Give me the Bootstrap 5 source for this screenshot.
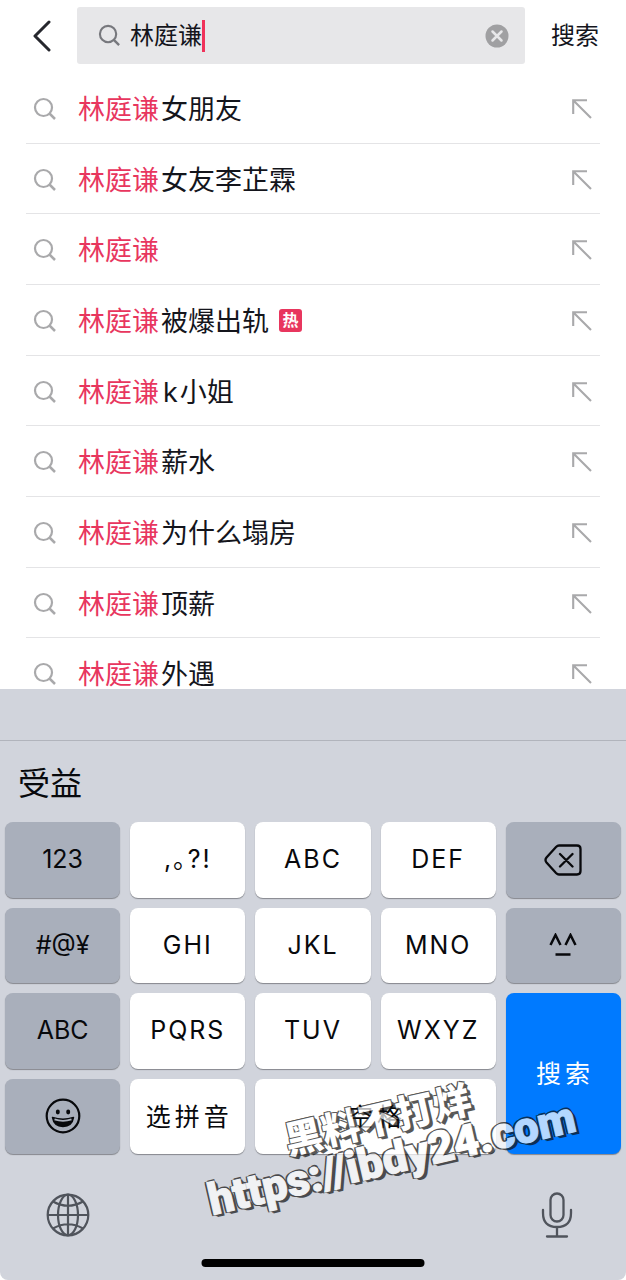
<!DOCTYPE html>
<html lang="zh-CN">
<head>
<meta charset="utf-8">
<meta name="viewport" content="width=device-width, initial-scale=1">
<title>搜索</title>
<link href="https://cdn.jsdelivr.net/npm/bootstrap@5.3.0/dist/css/bootstrap.min.css" rel="stylesheet">
<style>
  body { font-family: Inter, "Noto Sans CJK SC", sans-serif; color: #14151c; background: #fff; }
  svg { display: block; fill: none; stroke: currentColor; }
  .plain-btn { border: 0; background: none; padding: 0; color: inherit; }
  .top-bar { height: 73px; padding: 7px 27px 9px 32px; }
  .back-btn { width: 45px; color: #26272d; }
  .search-box { background: #e7e7e9; border-radius: 3px; padding: 0 16px 0 21px; color: #77787d; }
  .search-box input { width: 72px; font-size: 24px; line-height: 32px; margin-left: 9px; color: #14151c; background: none; border: 0; padding: 0; outline: 0; }
  .text-caret { width: 3px; height: 32px; background: #f0325a; }
  .go-btn { font-size: 24px; margin-left: 26px; }
  .suggestions { min-height: 0; }
  .suggestion-list { height: calc(100% + 20px); padding: 0 26px; }
  .suggestion-list li { flex: 1 1 0; min-height: 0; border-bottom: 1px solid #e4e4e6; }
  .suggestion-list a { font-size: 27px; line-height: 28px; padding: 2px 8px 0 7px; color: inherit; }
  .suggestion-list svg { color: #a9a9ab; }
  .lens-ico { margin-right: 21px; }
  .label-text { padding-top: 2px; }
  .hit { color: #e8365e; margin-right: 2px; }
  .latin-letter { margin: 0 2px; }
  .hot-tag { background: #e8365e; color: #fff; font-size: 16px; line-height: 22px; width: 23px; height: 23px; border-radius: 3px; margin-left: 10px; font-weight: 700; }
  .keyboard { background: #d1d4dc; color: #08090c; border-radius: 0 0 8px 8px; }
  .key-toolbar { height: 52px; border-bottom: 1px solid #b1b4bc; }
  .candidates { height: 81px; padding: 4px 18px 0; font-size: 32px; }
  .key-grid { display: grid; grid-template-columns: repeat(5, 1fr); grid-template-rows: repeat(4, 1fr); gap: 10px; height: 332px; padding: 0 5px; }
  .key { border: 0; border-radius: 8px; background: #fff; color: inherit; font-size: 25px; padding: 0; box-shadow: 0 1px 1px #85878d; letter-spacing: 2px; }
  .key-dark { background: #a9afbb; letter-spacing: 0; }
  .key-cjk { letter-spacing: 4px; padding: 2px 0 0 3px; }
  .key-go { background: #007aff; color: #fff; grid-row: 3 / 5; grid-column: 5; }
  .key-space { grid-column: 3 / 5; }
  .key-footer { height: 126px; padding: 0 53px 4px 46px; color: #50545c; }
  .home-bar { width: 223px; height: 8px; border-radius: 4px; background: #000; bottom: 13px; left: 50%; transform: translateX(-50%); }
  .site-mark { left: 50%; bottom: 101px; width: 400px; margin-left: -126px; transform: rotate(-13deg); opacity: .7; color: #fff; font: 900 44px/40px Roboto, "Noto Sans CJK SC", sans-serif; -webkit-text-stroke: 1px #fff; text-shadow: -2px -1px 0 #111, 1px -2px 0 #111, -2px 1px 0 #111, 2px 1px 0 #111, 2px 2px 0 #111, 3px 3px 0 #111; pointer-events: none; }
  .site-mark-name { font-size: 38px; margin-right: 10px; -webkit-text-stroke: 0; text-shadow: -1px -1px 0 #111, 1px -1px 0 #111, -1px 1px 0 #111, 1px 1px 0 #111, 2px 2px 0 #111, 3px 3px 0 #111; }
</style>
</head>
<body>
<svg class="d-none" aria-hidden="true">
  <symbol id="lens" viewBox="0 0 24 24"><circle cx="10.500" cy="10.500" r="8.500" stroke-width="2.200"/><path d="M16.500 16.500L22 22" stroke-width="2.500"/></symbol>
  <symbol id="fill-arrow" viewBox="0 0 20 20"><path d="M1.200 15V1.200H15M1.200 1.200L19 19" stroke-width="2.100"/></symbol>
</svg>
<div class="d-flex flex-column vh-100 overflow-hidden">
  <header class="top-bar d-flex align-items-stretch">
    <button class="plain-btn back-btn" aria-label="返回"><svg width="20" height="32" viewBox="0 0 20 32"><path d="M17 2L3 16L17 30" stroke-width="3" stroke-linecap="round" stroke-linejoin="round"/></svg></button>
    <div class="search-box d-flex align-items-center flex-grow-1">
      <svg width="23" height="23" class="flex-shrink-0"><use href="#lens"/></svg>
      <input id="q" type="text" value="林庭谦" aria-label="搜索内容"><span class="text-caret"></span>
      <button class="plain-btn ms-auto" aria-label="清除"><svg width="24" height="24" viewBox="0 0 24 24"><circle cx="12" cy="12" r="11.500" fill="#a0a0a2" stroke="none"/><path d="M7.500 7.500l9 9M16.500 7.500l-9 9" stroke="#e7e7e9" stroke-width="2.500" stroke-linecap="round"/></svg></button>
    </div>
    <button class="plain-btn go-btn">搜索</button>
  </header>

  <main class="suggestions flex-grow-1 overflow-hidden">
    <ul class="suggestion-list list-unstyled d-flex flex-column mb-0">
      <li class="d-flex"><a href="#" class="d-flex align-items-center w-100 text-decoration-none"><svg class="lens-ico" width="24" height="24"><use href="#lens"/></svg><span class="label-text"><span class="hit">林庭谦</span>女朋友</span><svg class="ms-auto" width="20" height="20"><use href="#fill-arrow"/></svg></a></li>
      <li class="d-flex"><a href="#" class="d-flex align-items-center w-100 text-decoration-none"><svg class="lens-ico" width="24" height="24"><use href="#lens"/></svg><span class="label-text"><span class="hit">林庭谦</span>女友李芷霖</span><svg class="ms-auto" width="20" height="20"><use href="#fill-arrow"/></svg></a></li>
      <li class="d-flex"><a href="#" class="d-flex align-items-center w-100 text-decoration-none"><svg class="lens-ico" width="24" height="24"><use href="#lens"/></svg><span class="label-text"><span class="hit">林庭谦</span></span><svg class="ms-auto" width="20" height="20"><use href="#fill-arrow"/></svg></a></li>
      <li class="d-flex"><a href="#" class="d-flex align-items-center w-100 text-decoration-none"><svg class="lens-ico" width="24" height="24"><use href="#lens"/></svg><span class="label-text"><span class="hit">林庭谦</span>被爆出轨</span><span class="hot-tag text-center">热</span><svg class="ms-auto" width="20" height="20"><use href="#fill-arrow"/></svg></a></li>
      <li class="d-flex"><a href="#" class="d-flex align-items-center w-100 text-decoration-none"><svg class="lens-ico" width="24" height="24"><use href="#lens"/></svg><span class="label-text"><span class="hit">林庭谦</span><span class="latin-letter">k</span>小姐</span><svg class="ms-auto" width="20" height="20"><use href="#fill-arrow"/></svg></a></li>
      <li class="d-flex"><a href="#" class="d-flex align-items-center w-100 text-decoration-none"><svg class="lens-ico" width="24" height="24"><use href="#lens"/></svg><span class="label-text"><span class="hit">林庭谦</span>薪水</span><svg class="ms-auto" width="20" height="20"><use href="#fill-arrow"/></svg></a></li>
      <li class="d-flex"><a href="#" class="d-flex align-items-center w-100 text-decoration-none"><svg class="lens-ico" width="24" height="24"><use href="#lens"/></svg><span class="label-text"><span class="hit">林庭谦</span>为什么塌房</span><svg class="ms-auto" width="20" height="20"><use href="#fill-arrow"/></svg></a></li>
      <li class="d-flex"><a href="#" class="d-flex align-items-center w-100 text-decoration-none"><svg class="lens-ico" width="24" height="24"><use href="#lens"/></svg><span class="label-text"><span class="hit">林庭谦</span>顶薪</span><svg class="ms-auto" width="20" height="20"><use href="#fill-arrow"/></svg></a></li>
      <li class="d-flex"><a href="#" class="d-flex align-items-center w-100 text-decoration-none"><svg class="lens-ico" width="24" height="24"><use href="#lens"/></svg><span class="label-text"><span class="hit">林庭谦</span>外遇</span><svg class="ms-auto" width="20" height="20"><use href="#fill-arrow"/></svg></a></li>
    </ul>
  </main>

  <section class="keyboard position-relative flex-shrink-0" aria-label="键盘">
    <div class="key-toolbar"></div>
    <div class="candidates d-flex align-items-center"><button class="plain-btn">受益</button></div>
    <div class="key-grid">
      <button class="key key-dark">123</button>
      <button class="key">,｡?!</button>
      <button class="key">ABC</button>
      <button class="key">DEF</button>
      <button class="key key-dark d-flex align-items-center justify-content-center" aria-label="删除"><svg width="38" height="32" viewBox="0 0 38 32"><path d="M15 1.500H33Q36.500 1.500 36.500 5V27Q36.500 30.500 33 30.500H15Q13.500 30.500 12 29L2.500 18.500Q.500 16 2.500 13.500L12 3Q13.500 1.500 15 1.500ZM16 10L28.500 22.500M28.500 10L16 22.500" stroke-width="2.300" stroke-linecap="round"/></svg></button>
      <button class="key key-dark">#@¥</button>
      <button class="key">GHI</button>
      <button class="key">JKL</button>
      <button class="key">MNO</button>
      <button class="key key-dark d-flex align-items-center justify-content-center" aria-label="颜文字"><svg width="28" height="24" viewBox="0 0 28 24"><path d="M1.500 12L6.500 2L11.500 12M16.500 12L21.500 2L26.500 12M6.500 21.500H21.500" stroke-width="2.500"/></svg></button>
      <button class="key key-dark">ABC</button>
      <button class="key">PQRS</button>
      <button class="key">TUV</button>
      <button class="key">WXYZ</button>
      <button class="key key-cjk key-go">搜索</button>
      <button class="key key-dark d-flex align-items-center justify-content-center" aria-label="表情"><svg width="36" height="36" viewBox="0 0 36 36"><circle cx="18" cy="18" r="16.300" stroke-width="2.200"/><ellipse cx="12.800" cy="14" rx="2" ry="2.400" fill="currentColor" stroke="none"/><ellipse cx="23.200" cy="14" rx="2" ry="2.400" fill="currentColor" stroke="none"/><path d="M7.500 19.500Q18 23 28.500 19.500Q27 28.500 18 28.500T7.500 19.500Z" fill="currentColor" stroke-width="1.500" stroke-linejoin="round"/><path d="M9.500 21.400Q18 24.200 26.500 21.400" stroke="#a9afbb" stroke-width="1.800"/></svg></button>
      <button class="key key-cjk">选拼音</button>
      <button class="key key-cjk key-space">空格</button>
    </div>
    <div class="key-footer d-flex align-items-center justify-content-between">
      <button class="plain-btn" aria-label="切换键盘"><svg width="44" height="44" viewBox="0 0 44 44"><g stroke-width="2.200"><circle cx="22" cy="22" r="20.300"/><ellipse cx="22" cy="22" rx="10" ry="20.300"/><path d="M22 1.700V42.300M1.700 22H42.300M7 8.500Q22 17 37 8.500M7 35.500Q22 27 37 35.500"/></g></svg></button>
      <button class="plain-btn" aria-label="语音输入"><svg width="32" height="46" viewBox="0 0 32 46"><g stroke-width="2.300" stroke-linecap="round"><rect x="9.500" y="1.500" width="13" height="28" rx="6.500"/><path d="M2 18V21Q2 35 16 35T30 21V18M16 35V44M6 44.500H26"/></g></svg></button>
    </div>
    <div class="home-bar position-absolute"></div>
    <div class="site-mark position-absolute text-center text-nowrap"><span class="site-mark-name">黑料不打烊</span><br>https://ibdy24.com</div>
  </section>
</div>
<script src="https://cdn.jsdelivr.net/npm/bootstrap@5.3.0/dist/js/bootstrap.bundle.min.js"></script>
</body>
</html>
